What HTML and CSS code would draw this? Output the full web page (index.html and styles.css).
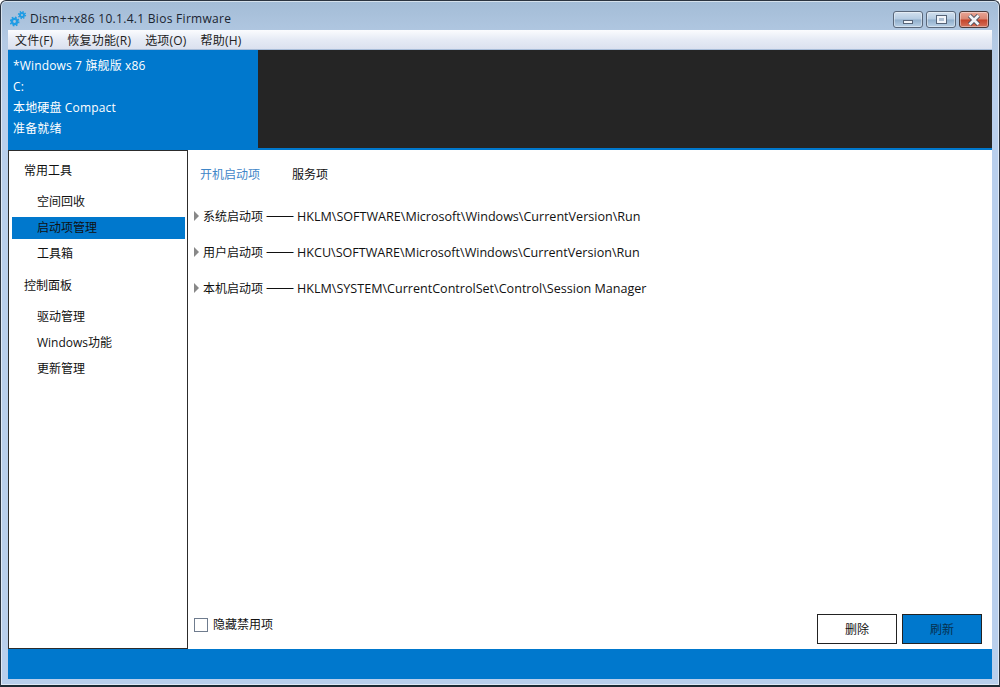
FILE: index.html
```html
<!DOCTYPE html>
<html lang="zh-CN">
<head>
  <meta charset="UTF-8" />
  <title>Dism++x86 10.1.4.1 Bios Firmware</title>
  <link rel="stylesheet" href="styles.css">
</head>
<body>
  <div class="window">

    <!-- Title bar -->
    <div class="titlebar">
      <svg class="app-icon" width="18" height="18" viewBox="0 0 18 18">
        <g fill="none" stroke="#1f9ce4">
          <circle cx="4.5" cy="12.5" r="2.6" stroke-width="2.4"/>
          <circle cx="4.5" cy="12.5" r="4.2" stroke-width="1.6" stroke-dasharray="1.65 1.65"/>
          <circle cx="12" cy="6" r="2" stroke-width="2"/>
          <circle cx="12" cy="6" r="3.4" stroke-width="1.5" stroke-dasharray="1.34 1.33"/>
        </g>
      </svg>
      <span class="title">Dism++x86 10.1.4.1 Bios Firmware</span>
      <div class="caption-buttons">
        <div class="cap-btn"><span class="glyph-min"></span></div>
        <div class="cap-btn"><span class="glyph-max"></span></div>
        <div class="cap-btn cap-close">
          <svg width="14" height="12" viewBox="0 0 14 12"><path d="M2.5 1.5 L11.5 10.5 M11.5 1.5 L2.5 10.5" stroke="#3d4a5c" stroke-width="4.4"/><path d="M2.5 1.5 L11.5 10.5 M11.5 1.5 L2.5 10.5" stroke="#f2f4f8" stroke-width="2.8"/></svg>
        </div>
      </div>
    </div>

    <!-- Menu -->
    <div class="menubar">
      <span>文件(F)</span>
      <span>恢复功能(R)</span>
      <span>选项(O)</span>
      <span>帮助(H)</span>
    </div>

    <!-- Current image -->
    <div class="header">
      <div class="image-info">
        <div>*Windows 7 旗舰版 x86</div>
        <div>C:</div>
        <div>本地硬盘 Compact</div>
        <div>准备就绪</div>
      </div>
      <div class="header-dark"></div>
    </div>

    <div class="content">
      <div class="sidebar">
        <div class="nav-group">常用工具</div>
        <div class="nav-item">空间回收</div>
        <div class="nav-item active">启动项管理</div>
        <div class="nav-item">工具箱</div>
        <div class="nav-group second">控制面板</div>
        <div class="nav-item">驱动管理</div>
        <div class="nav-item">Windows功能</div>
        <div class="nav-item">更新管理</div>
      </div>

      <div class="main">
        <div class="tabs">
          <span class="tab selected">开机启动项</span>
          <span class="tab">服务项</span>
        </div>
        <div class="tree">
          <div class="tree-row"><span class="arrow"></span><span>系统启动项</span><span class="dash">——</span><span class="path">HKLM\SOFTWARE\Microsoft\Windows\CurrentVersion\Run</span></div>
          <div class="tree-row"><span class="arrow"></span><span>用户启动项</span><span class="dash">——</span><span class="path">HKCU\SOFTWARE\Microsoft\Windows\CurrentVersion\Run</span></div>
          <div class="tree-row"><span class="arrow"></span><span>本机启动项</span><span class="dash">——</span><span class="path">HKLM\SYSTEM\CurrentControlSet\Control\Session Manager</span></div>
        </div>
        <div class="actions">
          <label class="hide-disabled"><span class="checkbox"></span>隐藏禁用项</label>
          <button class="btn">删除</button>
          <button class="btn btn-primary">刷新</button>
        </div>
      </div>
    </div>

    <div class="footer"></div>
  </div>
</body>
</html>
```

FILE: styles.css
```css
html, body {
  margin: 0;
  padding: 0;
  background: #fff;
}

body {
  font-family: "Open Sans", "Noto Sans CJK SC", sans-serif;
  font-size: 12px;
  color: #111;
}

.window {
  box-sizing: border-box;
  width: 1000px;
  height: 687px;
  border: 1px solid #2b3440;
  border-bottom: 2px solid #1d2a33;
  border-radius: 6px 6px 0 0;
  padding: 0 7px 6px;
  display: flex;
  flex-direction: column;
  background: linear-gradient(to bottom, #a3bcd6 0, #b4cae4 40px, #b9cfec 100px);
  box-shadow: inset 0 0 0 1px rgba(255, 255, 255, 0.55);
}

.titlebar {
  height: 29px;
  flex: none;
  display: flex;
  align-items: flex-start;
}

.app-icon {
  margin: 8px 0 0 2px;
}

.title {
  margin: 9px 0 0 2px;
  font-size: 12px;
  line-height: 18px;
  letter-spacing: 0.29px;
  color: #1a2430;
}

.caption-buttons {
  margin: 10px 3px 0 auto;
  display: flex;
  gap: 3px;
}

.cap-btn {
  box-sizing: border-box;
  width: 30px;
  height: 17px;
  border: 1px solid #59677a;
  border-radius: 3px;
  display: flex;
  align-items: center;
  justify-content: center;
  background: linear-gradient(to bottom, #d2e0ee 0, #b4cbe2 48%, #90aecb 52%, #b9d0e6 100%);
  box-shadow: inset 0 0 0 1px rgba(255, 255, 255, 0.4);
}

.cap-close {
  background: linear-gradient(to bottom, #e9a596 0, #d98672 48%, #c4432a 52%, #d4715a 100%);
  border-color: #4a3a3a;
}

.glyph-min {
  width: 8px;
  height: 2px;
  margin-top: 4px;
  background: #f2f5fa;
  border: 1px solid #566478;
}

.glyph-max {
  box-sizing: border-box;
  width: 9px;
  height: 7px;
  background: #aebfd2;
  border: 2px solid #f2f5fa;
  outline: 1px solid #566478;
}

.menubar {
  box-sizing: border-box;
  height: 20px;
  flex: none;
  display: flex;
  align-items: center;
  gap: 14px;
  padding-left: 7px;
  font-size: 12px;
  letter-spacing: 0.2px;
  color: #222;
  background: linear-gradient(to bottom, #fbfcfe 0, #e6ebf5 50%, #dbe1ef 100%);
  border-bottom: 1px solid #a7bcd8;
}

.header {
  flex: none;
  height: 100px;
  box-sizing: border-box;
  padding-bottom: 2px;
  display: flex;
  background: #0078cd;
}

.image-info {
  width: 250px;
  padding: 5px 0 0 5px;
  box-sizing: border-box;
  color: #fff;
  font-size: 12px;
  letter-spacing: 0.15px;
  line-height: 21px;
}

.header-dark {
  flex: 1;
  background: #252525;
}

.content {
  flex: 1;
  min-height: 0;
  display: flex;
  background: #fff;
}

.sidebar {
  box-sizing: border-box;
  width: 180px;
  flex: none;
  padding: 9px 2px 0 3px;
  border: 1px solid #2c2c2c;
  background: #fff;
}

.nav-group {
  height: 22px;
  line-height: 22px;
  padding-left: 12px;
  margin-bottom: 9px;
}

.nav-group.second {
  margin-top: 10px;
}

.nav-item {
  height: 22px;
  line-height: 22px;
  padding-left: 25px;
  margin-bottom: 4px;
}

.nav-item.active {
  background: #0078cd;
}

.main {
  flex: 1;
  min-width: 0;
  display: flex;
  flex-direction: column;
  padding: 15px 10px 5px 5px;
}

.tabs {
  display: flex;
  gap: 32px;
  padding-left: 7px;
  line-height: 20px;
}

.tab.selected {
  color: #3f86c8;
}

.tree {
  margin-top: 22px;
  display: flex;
  flex-direction: column;
  gap: 16px;
}

.tree-row {
  height: 20px;
  line-height: 20px;
  display: flex;
  align-items: center;
  white-space: nowrap;
}

.arrow {
  width: 0;
  height: 0;
  margin: -3px 4px 0 1px;
  border-left: 5px solid #888;
  border-top: 5px solid transparent;
  border-bottom: 5px solid transparent;
}

.dash {
  width: 34px;
  margin-bottom: 6px;
  text-align: center;
  font-family: "Noto Sans CJK SC", sans-serif;
  font-size: 17px;
}

.path {
  font-size: 12.57px;
}

.actions {
  margin-top: auto;
  display: flex;
  align-items: flex-start;
  gap: 5px;
}

.hide-disabled {
  display: flex;
  align-items: center;
  margin: 4px auto 0 1px;
  line-height: 14px;
}

.checkbox {
  box-sizing: border-box;
  width: 14px;
  height: 14px;
  margin-right: 5px;
  border: 1px solid #6f7c8e;
  background: #fff;
}

.btn {
  box-sizing: border-box;
  width: 80px;
  height: 30px;
  padding: 0;
  border: 1px solid #222;
  background: #fff;
  color: #111;
  font-family: inherit;
  font-size: 12px;
}

.btn-primary {
  background: #0078cd;
  color: #06304f;
}

.footer {
  height: 30px;
  flex: none;
  background: #0078cd;
}
```
